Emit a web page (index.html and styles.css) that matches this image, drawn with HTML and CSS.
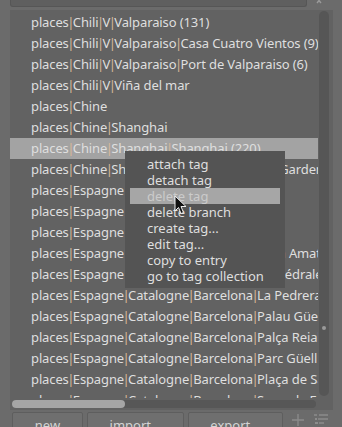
FILE: index.html
```html
<!DOCTYPE html>
<html lang="en">
<head>
  <meta charset="UTF-8" />
  <title>Tagging</title>
  <link rel="stylesheet" href="styles.css">
</head>
<body>

  <div class="top">
    <div class="search"></div>
    <svg class="clear" width="10" height="8" viewBox="0 0 10 8">
      <path d="M2 -3 L7 3 M8 -3 L3 3" stroke="#9a9a9a" stroke-width="1.4" fill="none" />
    </svg>
  </div>

  <div class="view">
    <div class="rows" id="rows"></div>
    <div class="vscroll"><div class="vhandle"><span class="grip"></span></div></div>
    <div class="hscroll"><div class="htrack"><div class="hhandle"></div></div></div>
  </div>

  <div class="buttons">
    <div class="btn btn-new">new</div>
    <div class="btn btn-import">import...</div>
    <div class="btn btn-export">export...</div>
    <svg class="tool" width="14" height="14" viewBox="0 0 14 14">
      <path d="M7 1 V13 M1 7 H13" stroke="#8c8c8c" stroke-width="1.3" fill="none" />
    </svg>
    <svg class="tool" width="16" height="14" viewBox="0 0 16 14">
      <path d="M1 2 H4 M6 2 H15 M5 6 H15 M6 10 H11" stroke="#8c8c8c" stroke-width="1.5" fill="none" />
      <rect x="2" y="5" width="2" height="2" fill="#8c8c8c" />
      <rect x="2" y="9" width="3" height="2" fill="#8c8c8c" />
    </svg>
  </div>

  <div class="menu">
    <div class="item">attach tag</div>
    <div class="item">detach tag</div>
    <div class="item active">delete tag</div>
    <div class="item">delete branch</div>
    <div class="item">create tag...</div>
    <div class="item">edit tag...</div>
    <div class="item">copy to entry</div>
    <div class="item">go to tag collection</div>
  </div>

  <svg class="cursor" width="14" height="21" viewBox="0 0 14 21">
    <path d="M1 1 L1 16 L4.5 12.5 L7 18.5 L9.5 17.5 L7 11.5 L12 11.5 Z" fill="#111" stroke="#eee" stroke-width="1" />
  </svg>

  <script>
    const tags = [
      "places|Chili|V|Valparaiso (131)",
      "places|Chili|V|Valparaiso|Casa Cuatro Vientos (9)",
      "places|Chili|V|Valparaiso|Port de Valparaiso (6)",
      "places|Chili|V|Viña del mar",
      "places|Chine",
      "places|Chine|Shanghai",
      "places|Chine|Shanghai|Shanghai (220)",
      "places|Chine|Shanghai|Shanghai|Yuyuan Garden",
      "places|Espagne",
      "places|Espagne|Catalogne",
      "places|Espagne|Catalogne|Barcelona (61)",
      "places|Espagne|Catalogne|Barcelona|Casa Amatller",
      "places|Espagne|Catalogne|Barcelona|Cathédrale",
      "places|Espagne|Catalogne|Barcelona|La Pedrera",
      "places|Espagne|Catalogne|Barcelona|Palau Güell",
      "places|Espagne|Catalogne|Barcelona|Palça Reial",
      "places|Espagne|Catalogne|Barcelona|Parc Güell",
      "places|Espagne|Catalogne|Barcelona|Plaça de Sant Jaume",
      "places|Espagne|Catalogne|Barcelona|Sagrada Familia"
    ];
    const selectedIndex = 6;

    const rowsEl = document.getElementById("rows");
    tags.forEach((tag, i) => {
      const row = document.createElement("div");
      row.classList.add("row");
      if (i === selectedIndex) row.classList.add("selected");
      tag.split("|").forEach((part, j) => {
        if (j > 0) {
          const sep = document.createElement("span");
          sep.classList.add("sep");
          sep.textContent = "|";
          row.appendChild(sep);
        }
        row.appendChild(document.createTextNode(part));
      });
      rowsEl.appendChild(row);
    });
  </script>
</body>
</html>
```

FILE: styles.css
```css
:root {
  --bg: #6b6b6b;
  --list-bg: #626262;
  --text: #dfdfdf;
  --selected: #a3a3a3;
  --menu-bg: #545454;
}

body {
  margin: 0;
  width: 342px;
  height: 427px;
  overflow: hidden;
  background: var(--bg);
  font-family: "Noto Sans", sans-serif;
  font-size: 13px;
  color: var(--text);
  position: relative;
}

.top {
  height: 8px;
  display: flex;
  padding-left: 10px;
}

.search {
  width: 297px;
  height: 7px;
  box-sizing: border-box;
  background: #5f5f5f;
  border: 1px solid #565656;
  border-top: none;
  border-radius: 0 0 3px 3px;
}

.clear {
  margin-left: 7px;
}

.view {
  margin: 2px 9px 0 10px;
  height: 400px;
  background: var(--list-bg);
  display: grid;
  grid-template-columns: 308px 15px;
  grid-template-rows: 388px 12px;
}

.rows {
  padding-top: 2px;
  overflow: hidden;
}

.row {
  height: 21px;
  line-height: 21px;
  padding-left: 21px;
  white-space: nowrap;
  letter-spacing: -0.12px;
}

.row.selected {
  background: var(--selected);
}

.sep {
  margin: 0 -1.5px;
  color: #d9b898;
}

.vscroll {
  padding: 1px 0 0 1px;
}

.vhandle {
  width: 10px;
  height: 385px;
  background: #565656;
  border-radius: 5px;
  display: flex;
  flex-direction: column;
  align-items: center;
  padding-top: 315px;
  box-sizing: border-box;
}

.grip {
  width: 4px;
  height: 4px;
  border-radius: 2px;
  background: #9a9a9a;
}

.hscroll {
  grid-column: 1 / 3;
  padding: 2px 0 0 2px;
}

.htrack {
  width: 304px;
  height: 8px;
  background: #575757;
  border-radius: 4px;
}

.hhandle {
  width: 113px;
  height: 8px;
  background: #a5a5a5;
  border-radius: 4px;
}

.buttons {
  margin-top: 2px;
  padding-left: 12px;
  display: flex;
  gap: 4px;
  align-items: flex-start;
}

.btn {
  height: 24px;
  box-sizing: border-box;
  border: 1px solid #5e5e5e;
  border-radius: 2px;
  background: #6f6f6f;
  color: #d4d4d4;
  text-align: center;
  line-height: 24px;
}

.btn-new {
  width: 71px;
}

.btn-import {
  width: 97px;
}

.btn-export {
  width: 95px;
}

.tool {
  margin-top: 1px;
  margin-left: 4px;
}

.menu {
  position: absolute;
  left: 125px;
  top: 151px;
  width: 160px;
  height: 137px;
  box-sizing: border-box;
  padding: 5px;
  background: var(--menu-bg);
}

.item {
  height: 16px;
  line-height: 16px;
  padding-left: 17px;
  white-space: nowrap;
}

.item.active {
  background: #a6a6a6;
  color: #cbcbcb;
}

.cursor {
  position: absolute;
  left: 174px;
  top: 195px;
}
```
